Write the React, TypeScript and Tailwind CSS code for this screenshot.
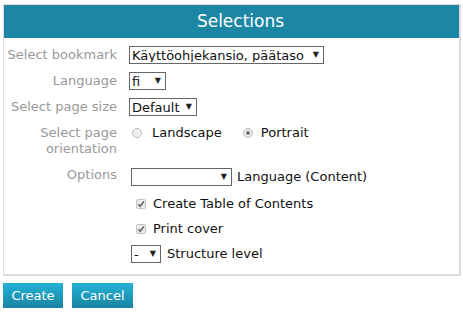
import React from "react";

const font = { fontFamily: '"DejaVu Sans", Verdana, sans-serif' };

const Select = ({ value, width }: { value: string; width: string }) => (
  <div className={`flex items-center justify-between h-[18px] border border-[#666] bg-white pl-[2px] pr-[4px] text-[13px] leading-none text-[#111] ${width}`}>
    <span className="truncate">{value}</span>
    <span className="text-[8px] text-[#222]">▼</span>
  </div>
);

const Radio = ({ checked }: { checked?: boolean }) => (
  <span className="flex items-center justify-center w-[10px] h-[10px] rounded-full border border-[#bdbdbd] bg-[#f0f0f0]">
    {checked && <span className="w-[4px] h-[4px] rounded-full bg-[#777]" />}
  </span>
);

const Check = () => (
  <span className="flex items-center justify-center w-[10px] h-[10px] rounded-[2px] border border-[#c4c4c4] bg-[#ececec]">
    <svg width="8" height="8" viewBox="0 0 8 8" fill="none" stroke="#666" strokeWidth="1.6">
      <polyline points="1.2 4.2 3.2 6.2 6.8 1.5" />
    </svg>
  </span>
);

const Label = ({ children }: { children: React.ReactNode }) => (
  <div className="w-[113px] text-right text-[13px] leading-[16px] text-[#999] shrink-0">{children}</div>
);

export default function App() {
  return (
    <div className="w-[463px] h-[313px] bg-white pt-[4px] pl-[3px]" style={font}>
      <div className="w-[458px] h-[272px] border border-[#dcdcdc] border-r-2 border-b-2">
        <div className="h-[33px] bg-[#1c87a4] flex items-center justify-center pl-[18px] text-white text-[17px]">
          Selections
        </div>

        <div className="pt-[4px]">
          <div className="flex items-center h-[26px]">
            <Label>Select bookmark</Label>
            <div className="ml-[12px]">
              <Select value="Käyttöohjekansio, päätaso" width="w-[195px]" />
            </div>
          </div>

          <div className="flex items-center h-[26px]">
            <Label>Language</Label>
            <div className="ml-[12px]">
              <Select value="fi" width="w-[37px]" />
            </div>
          </div>

          <div className="flex items-center h-[26px]">
            <Label>Select page size</Label>
            <div className="ml-[12px]">
              <Select value="Default" width="w-[68px]" />
            </div>
          </div>

          <div className="flex items-start pt-[5px] h-[46px]">
            <Label>
              Select page
              <br />
              orientation
            </Label>
            <div className="ml-[12px] flex items-center h-[16px] text-[13px] text-[#111]">
              <span className="ml-[3px]"><Radio /></span>
              <span className="ml-[10px]">Landscape</span>
              <span className="ml-[21px]"><Radio checked /></span>
              <span className="ml-[8px]">Portrait</span>
            </div>
          </div>

          <div className="flex items-start">
            <Label>
              <div className="pt-[1px]">Options</div>
            </Label>
            <div className="ml-[14px] flex flex-col text-[13px] text-[#111]">
              <div className="flex items-center h-[18px] mt-[2px]">
                <Select value="" width="w-[101px]" />
                <span className="ml-[5px]">Language (Content)</span>
              </div>
              <div className="flex items-center h-[16px] mt-[10px]">
                <span className="ml-[5px]"><Check /></span>
                <span className="ml-[7px]">Create Table of Contents</span>
              </div>
              <div className="flex items-center h-[16px] mt-[9px]">
                <span className="ml-[5px]"><Check /></span>
                <span className="ml-[7px]">Print cover</span>
              </div>
              <div className="flex items-center h-[18px] mt-[8px]">
                <Select value="-" width="w-[30px]" />
                <span className="ml-[6px]">Structure level</span>
              </div>
            </div>
          </div>
        </div>
      </div>

      <div className="flex gap-[9px] mt-[7px]">
        <button className="w-[60px] h-[25px] bg-gradient-to-b from-[#22b3d8] to-[#1a83a0] text-white text-[13px]">
          Create
        </button>
        <button className="w-[61px] h-[25px] bg-gradient-to-b from-[#22b3d8] to-[#1a83a0] text-white text-[13px]">
          Cancel
        </button>
      </div>
    </div>
  );
}
